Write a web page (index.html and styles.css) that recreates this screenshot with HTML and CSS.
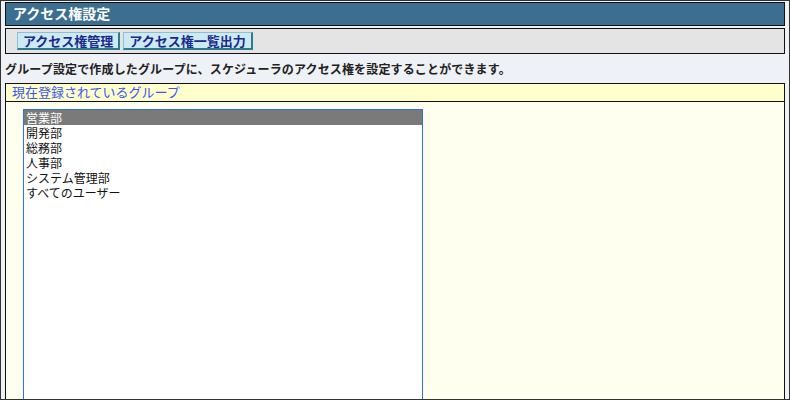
FILE: index.html
```html
<!DOCTYPE html>
<html>
<head>
    <title>アクセス権設定</title>
    <link rel="stylesheet" href="styles.css">
</head>
<body>
    <div class="frame">
        <div class="title-bar">アクセス権設定</div>
        <div class="toolbar">
            <button class="tool-btn">アクセス権管理</button>
            <button class="tool-btn">アクセス権一覧出力</button>
        </div>
        <p class="desc">グループ設定で作成したグループに、スケジューラのアクセス権を設定することができます。</p>
        <div class="panel">
            <div class="panel-head">現在登録されているグループ</div>
            <div class="panel-body">
                <ul class="group-list">
                    <li class="selected">営業部</li>
                    <li>開発部</li>
                    <li>総務部</li>
                    <li>人事部</li>
                    <li>システム管理部</li>
                    <li>すべてのユーザー</li>
                </ul>
            </div>
        </div>
    </div>
</body>
</html>
```

FILE: styles.css
```css
body {
    margin: 0;
    padding: 0;
    font-family: "Noto Sans CJK JP", "DejaVu Sans", sans-serif;
    font-size: 12px;
    color: #222;
}
.frame {
    box-sizing: border-box;
    width: 790px;
    height: 400px;
    border: 1px solid #333;
    background-color: #eef1f5;
    padding: 1px 4px 0 4px;
    overflow: hidden;
}
.title-bar {
    box-sizing: border-box;
    height: 24px;
    line-height: 21px;
    background-color: #3c6e90;
    border: 1px solid #111;
    color: white;
    font-weight: bold;
    font-size: 14px;
    padding-left: 7px;
}
.toolbar {
    box-sizing: border-box;
    height: 26px;
    margin-top: 2px;
    background-color: #e4e4e4;
    border: 1px solid #111;
    padding: 3px 0 0 11px;
    display: flex;
    gap: 3px;
}
.tool-btn {
    box-sizing: border-box;
    height: 18px;
    margin: 0;
    padding: 0 5px;
    font-family: inherit;
    font-size: 13px;
    font-weight: bold;
    line-height: 14px;
    color: #1a2a8c;
    background-color: #cde9f3;
    border: 1px solid;
    border-color: #8fc0d0 #2f7b8c #2f7b8c #8fc0d0;
    border-right-width: 2px;
    border-bottom-width: 2px;
}
.desc {
    margin: 6px 0 0 0;
    height: 23px;
    line-height: 17px;
    font-weight: bold;
    font-size: 12px;
    letter-spacing: 0.15px;
    color: #222;
}
.panel {
    border: 1px solid #111;
    background-color: #fffff0;
    height: 330px;
}
.panel-head {
    box-sizing: border-box;
    height: 18px;
    line-height: 16px;
    background-color: #ffffcc;
    border-bottom: 1px solid #111;
    color: #3b55f0;
    font-size: 13px;
    padding-left: 6px;
}
.panel-body {
    padding: 7px 0 0 17px;
}
.group-list {
    list-style: none;
    margin: 0;
    padding: 0;
    width: 398px;
    height: 320px;
    background-color: white;
    border: 1px solid #2f6fe0;
}
.group-list li {
    height: 15px;
    line-height: 15px;
    font-size: 12px;
    padding-left: 2px;
    color: #111;
    overflow: hidden;
}
.group-list li.selected {
    background-color: #7a7a7a;
    color: white;
}
```
